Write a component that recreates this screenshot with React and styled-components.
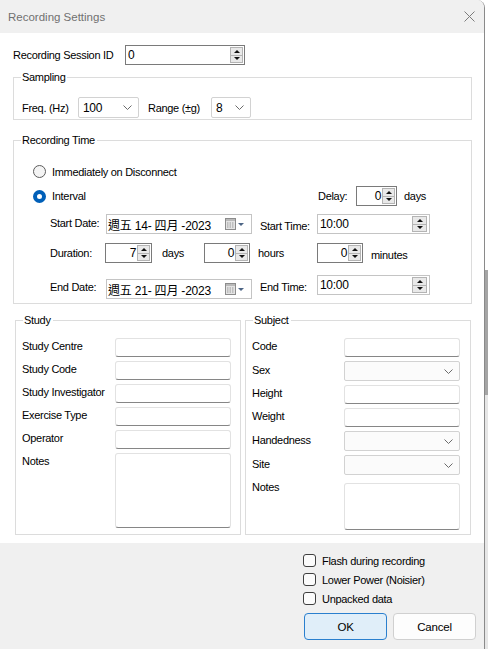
import React from 'react'
import styled, { createGlobalStyle, css } from 'styled-components'

const FONT = `"Liberation Sans", "Noto Sans CJK TC", sans-serif`

const GlobalStyle = createGlobalStyle`
  html, body { margin: 0; padding: 0; }
  body {
    font-family: ${FONT};
    font-size: 11px;
    letter-spacing: -0.3px;
    color: #000;
    background: #fff;
  }
  * { box-sizing: border-box; }
`

const Screen = styled.div`
  display: flex;
  width: 488px;
  height: 649px;
  overflow: hidden;
`

const Window = styled.div`
  width: 485px;
  height: 649px;
  flex: none;
  display: flex;
  flex-direction: column;
  border-right: 1px solid #8a8a8a;
  border-top-right-radius: 8px;
  overflow: hidden;
`

const Edge = styled.div`
  flex: 1;
  background: linear-gradient(to bottom, #fff 0, #fff 270px, #a5a5a5 270px, #a5a5a5 395px, #e6e6e6 395px);
`

const TitleBar = styled.div`
  height: 33px;
  flex: none;
  display: flex;
  align-items: center;
  justify-content: space-between;
  padding: 0 9px 0 8px;
  background: #f0f0f0;
`

const Title = styled.span`
  font-size: 11.5px;
  letter-spacing: 0;
  color: #707070;
`

const Body = styled.div`
  height: 510px;
  flex: none;
  background: #fff;
  padding: 12px 12px 0 13px;
  display: flex;
  flex-direction: column;
`

const Row = styled.div`
  display: flex;
  align-items: center;
  height: ${p => p.$h || 20}px;
  margin-top: ${p => p.$mt || 0}px;
  padding-left: ${p => p.$pl || 0}px;
`

const Label = styled.span`
  flex: none;
  width: ${p => (p.$w ? `${p.$w}px` : 'auto')};
  margin-left: ${p => p.$ml || 0}px;
  white-space: nowrap;
  ${p => p.$dy > 0 && css`padding-top: ${p.$dy * 2}px;`}
  ${p => p.$dy < 0 && css`padding-bottom: ${-p.$dy * 2}px;`}
`

const Group = styled.div`
  position: relative;
  flex: none;
  border: 1px solid #dcdcdc;
  margin-top: ${p => p.$mt || 0}px;
  height: ${p => p.$h}px;
  width: ${p => (p.$w ? `${p.$w}px` : 'auto')};
  padding: ${p => p.$pad || '0'};
`

const Legend = styled.span`
  position: absolute;
  top: -8px;
  left: 7px;
  padding: 0 2px 0 1px;
  background: #fff;
  line-height: 14px;
`

/* spin boxes */
const SpinBox = styled.div`
  flex: none;
  display: flex;
  width: ${p => p.$w}px;
  height: 20px;
  padding: 1px;
  background: #fff;
  border: 1px solid ${p => (p.$light ? '#c4c4c4' : '#7a7a7a')};
  ${p => p.$dy > 0 && css`margin-top: ${p.$dy * 2}px;`}
  ${p => p.$dy < 0 && css`margin-bottom: ${-p.$dy * 2}px;`}
`

const SpinValue = styled.span`
  flex: 1;
  line-height: 16px;
  font-size: 12px;
  padding: 0 1px;
  text-align: ${p => (p.$right ? 'right' : 'left')};
  white-space: nowrap;
  overflow: hidden;
`

const SpinCol = styled.div`
  flex: none;
  width: ${p => (p.$wide ? 15 : 13)}px;
  margin-right: ${p => (p.$wide ? 1 : 0)}px;
  display: flex;
  flex-direction: column;
  border: 1px solid #b4b4b4;
  background: #e9e9e9;
`

const SpinBtn = styled.div`
  flex: 1;
  display: flex;
  align-items: center;
  justify-content: center;
  & + & { border-top: 1px solid #b4b4b4; }
`

const Tri = styled.span`
  width: 0;
  height: 0;
  border-left: 3px solid transparent;
  border-right: 3px solid transparent;
  ${p => (p.$up
    ? css`border-bottom: 3px solid #111;`
    : css`border-top: 3px solid #111;`)}
`

const Spin = ({ w, value, right, light, wide, dy }) => (
  <SpinBox $w={w} $light={light} $dy={dy}>
    <SpinValue $right={right}>{value}</SpinValue>
    <SpinCol $wide={wide}>
      <SpinBtn><Tri $up /></SpinBtn>
      <SpinBtn><Tri /></SpinBtn>
    </SpinCol>
  </SpinBox>
)

/* date picker */
const DateBox = styled.div`
  flex: none;
  width: ${p => p.$w}px;
  height: 20px;
  display: flex;
  align-items: center;
  padding: 0 6px 0 1px;
  border: 1px solid #c4c4c4;
  background: #fff;
  font-size: 12px;
  ${p => p.$dy > 0 && css`margin-top: ${p.$dy * 2}px;`}
`

const DateText = styled.span`
  flex: 1;
  white-space: nowrap;
  letter-spacing: -0.2px;
`

const CalendarIcon = () => (
  <svg width="20" height="12" viewBox="0 0 20 12">
    <rect x="0.5" y="0.5" width="10" height="11" fill="#e4e4e4" stroke="#8c8c8c" />
    <rect x="1" y="1" width="9" height="2" fill="#b9b9b9" />
    {[2, 4.5, 7].map(x => [4.5, 6.5, 8.5].map(y => (
      <rect key={`${x}-${y}`} x={x} y={y} width="1.5" height="1" fill="#9a9a9a" />
    )))}
    <path d="M13 5 L19 5 L16 8 Z" fill="#4d6585" />
  </svg>
)

const DatePicker = ({ w, value, dy }) => (
  <DateBox $w={w} $dy={dy}>
    <DateText>{value}</DateText>
    <CalendarIcon />
  </DateBox>
)

/* selects */
const SelectBox = styled.div`
  flex: none;
  width: ${p => p.$w}px;
  height: ${p => p.$h || 20}px;
  display: flex;
  align-items: center;
  justify-content: space-between;
  padding: 0 6px 0 4px;
  border: 1px solid #d2d2d2;
  border-radius: 2px;
  font-size: 12px;
  background: ${p => (p.$soft ? '#fbfbfb' : '#fff')};
`

const Chevron = () => (
  <svg width="9" height="5" viewBox="0 0 9 5">
    <path d="M0.5 0.5 L4.5 4.5 L8.5 0.5" fill="none" stroke="#6b6b6b" strokeWidth="1" />
  </svg>
)

const Select = ({ w, h, value, soft }) => (
  <SelectBox $w={w} $h={h} $soft={soft}>
    <span>{value}</span>
    <Chevron />
  </SelectBox>
)

/* radios */
const RadioOption = styled.div`
  flex: none;
  display: flex;
  align-items: center;
  gap: 6px;
  width: ${p => (p.$w ? `${p.$w}px` : 'auto')};
`

const RadioDot = styled.span`
  flex: none;
  width: 13px;
  height: 13px;
  border-radius: 50%;
  ${p => (p.$checked
    ? css`border: 4px solid #005fb8; background: #fff;`
    : css`border: 1px solid #5c5c5c; background: #f4f4f4;`)}
`

/* study / subject */
const Columns = styled.div`
  display: flex;
  gap: 4px;
  margin: 16px 0 0 2px;
`

const Form = styled.div`
  display: grid;
  grid-template-columns: ${p => p.$labelW}px 116px;
  row-gap: 4px;
  align-items: center;
`

const FieldLabel = styled.span`
  white-space: nowrap;
  padding-bottom: 3px;
  ${p => p.$top && css`align-self: start; padding: 2px 0 0;`}
`

const TextField = styled.div`
  height: ${p => p.$h || 19}px;
  margin-top: ${p => p.$mt || 0}px;
  background: #fff;
  border: 1px solid #e2e2e2;
  border-bottom-color: #868686;
  border-radius: 3px;
`

/* footer */
const Footer = styled.div`
  flex: 1;
  background: #f0f0f0;
  padding: 8px 0 0 303px;
  display: flex;
  flex-direction: column;
`

const CheckRow = styled.div`
  height: 19px;
  display: flex;
  align-items: center;
  gap: 6px;
`

const CheckBox = styled.span`
  width: 13px;
  height: 13px;
  border: 1px solid #3f3f3f;
  border-radius: 3px;
  background: #fbfbfb;
`

const ButtonRow = styled.div`
  display: flex;
  gap: 6px;
  margin: 5px 0 0 1px;
`

const Button = styled.button`
  width: 83px;
  height: 27px;
  font-family: ${FONT};
  font-size: 11.5px;
  letter-spacing: -0.2px;
  color: #000;
  border-radius: 4px;
  border: 1px solid ${p => (p.$primary ? '#2a7fce' : '#d0d0d0')};
  background: ${p => (p.$primary ? '#e0eef9' : '#fdfdfd')};
`

const CloseIcon = () => (
  <svg width="11" height="11" viewBox="0 0 11 11">
    <path d="M0.5 0.5 L10.5 10.5 M10.5 0.5 L0.5 10.5" stroke="#7c7c7c" strokeWidth="1" />
  </svg>
)

const studyRows = ['Study Centre', 'Study Code', 'Study Investigator', 'Exercise Type', 'Operator']

const subjectRows = [
  { label: 'Code' },
  { label: 'Sex', select: true },
  { label: 'Height' },
  { label: 'Weight' },
  { label: 'Handedness', select: true },
  { label: 'Site', select: true },
]

const checks = ['Flash during recording', 'Lower Power (Noisier)', 'Unpacked data']

export default function App() {
  return (
    <>
      <GlobalStyle />
      <Screen>
        <Window>
          <TitleBar>
            <Title>Recording Settings</Title>
            <CloseIcon />
          </TitleBar>

          <Body>
            <Row>
              <Label $w={112}>Recording Session ID</Label>
              <Spin w={120} value="0" />
            </Row>

            <Group $mt={12} $h={43} $pad="19px 0 0 8px">
              <Legend>Sampling</Legend>
              <Row $h={21}>
                <Label $w={56}>Freq. (Hz)</Label>
                <Select w={61} h={21} value="100" />
                <Label $w={63} $ml={9}>Range (±g)</Label>
                <Select w={40} h={21} value="8" />
              </Row>
            </Group>

            <Group $mt={20} $h={164} $pad="23px 0 0 0">
              <Legend>Recording Time</Legend>
              <Row $h={15} $pl={19}>
                <RadioOption>
                  <RadioDot />
                  <span>Immediately on Disconnect</span>
                </RadioOption>
              </Row>
              <Row $mt={7} $pl={19}>
                <RadioOption $w={285}>
                  <RadioDot $checked />
                  <span>Interval</span>
                </RadioOption>
                <Label $w={38}>Delay:</Label>
                <Spin w={41} value="0" right />
                <Label $ml={7}>days</Label>
              </Row>
              <Row $mt={8} $pl={36}>
                <Label $w={56} $dy={-1}>Start Date:</Label>
                <DatePicker w={146} value="週五 14- 四月 -2023" />
                <Label $w={57} $ml={8} $dy={2}>Start Time:</Label>
                <Spin w={113} value="10:00" light wide />
              </Row>
              <Row $mt={9} $pl={36}>
                <Label $w={55}>Duration:</Label>
                <Spin w={47} value="7" right />
                <Label $w={42} $ml={10}>days</Label>
                <Spin w={46} value="0" right />
                <Label $w={59} $ml={8}>hours</Label>
                <Spin w={46} value="0" right />
                <Label $ml={8} $dy={2}>minutes</Label>
              </Row>
              <Row $mt={12} $h={24} $pl={36}>
                <Label $w={56}>End Date:</Label>
                <DatePicker w={146} value="週五 21- 四月 -2023" dy={2} />
                <Label $w={57} $ml={8}>End Time:</Label>
                <Spin w={113} value="10:00" light wide dy={-2} />
              </Row>
            </Group>

            <Columns>
              <Group $w={226} $h={215} $pad="17px 0 0 6px">
                <Legend>Study</Legend>
                <Form $labelW={93}>
                  {studyRows.map(label => (
                    <React.Fragment key={label}>
                      <FieldLabel>{label}</FieldLabel>
                      <TextField />
                    </React.Fragment>
                  ))}
                  <FieldLabel $top>Notes</FieldLabel>
                  <TextField $h={75} />
                </Form>
              </Group>

              <Group $w={226} $h={215} $pad="17px 0 0 6px">
                <Legend>Subject</Legend>
                <Form $labelW={92}>
                  {subjectRows.map(row => (
                    <React.Fragment key={row.label}>
                      <FieldLabel>{row.label}</FieldLabel>
                      {row.select ? <Select w={116} h={20} value="" soft /> : <TextField />}
                    </React.Fragment>
                  ))}
                  <FieldLabel $top>Notes</FieldLabel>
                  <TextField $h={47} $mt={4} />
                </Form>
              </Group>
            </Columns>
          </Body>

          <Footer>
            {checks.map(text => (
              <CheckRow key={text}>
                <CheckBox />
                <span>{text}</span>
              </CheckRow>
            ))}
            <ButtonRow>
              <Button $primary>OK</Button>
              <Button>Cancel</Button>
            </ButtonRow>
          </Footer>
        </Window>
        <Edge />
      </Screen>
    </>
  )
}
